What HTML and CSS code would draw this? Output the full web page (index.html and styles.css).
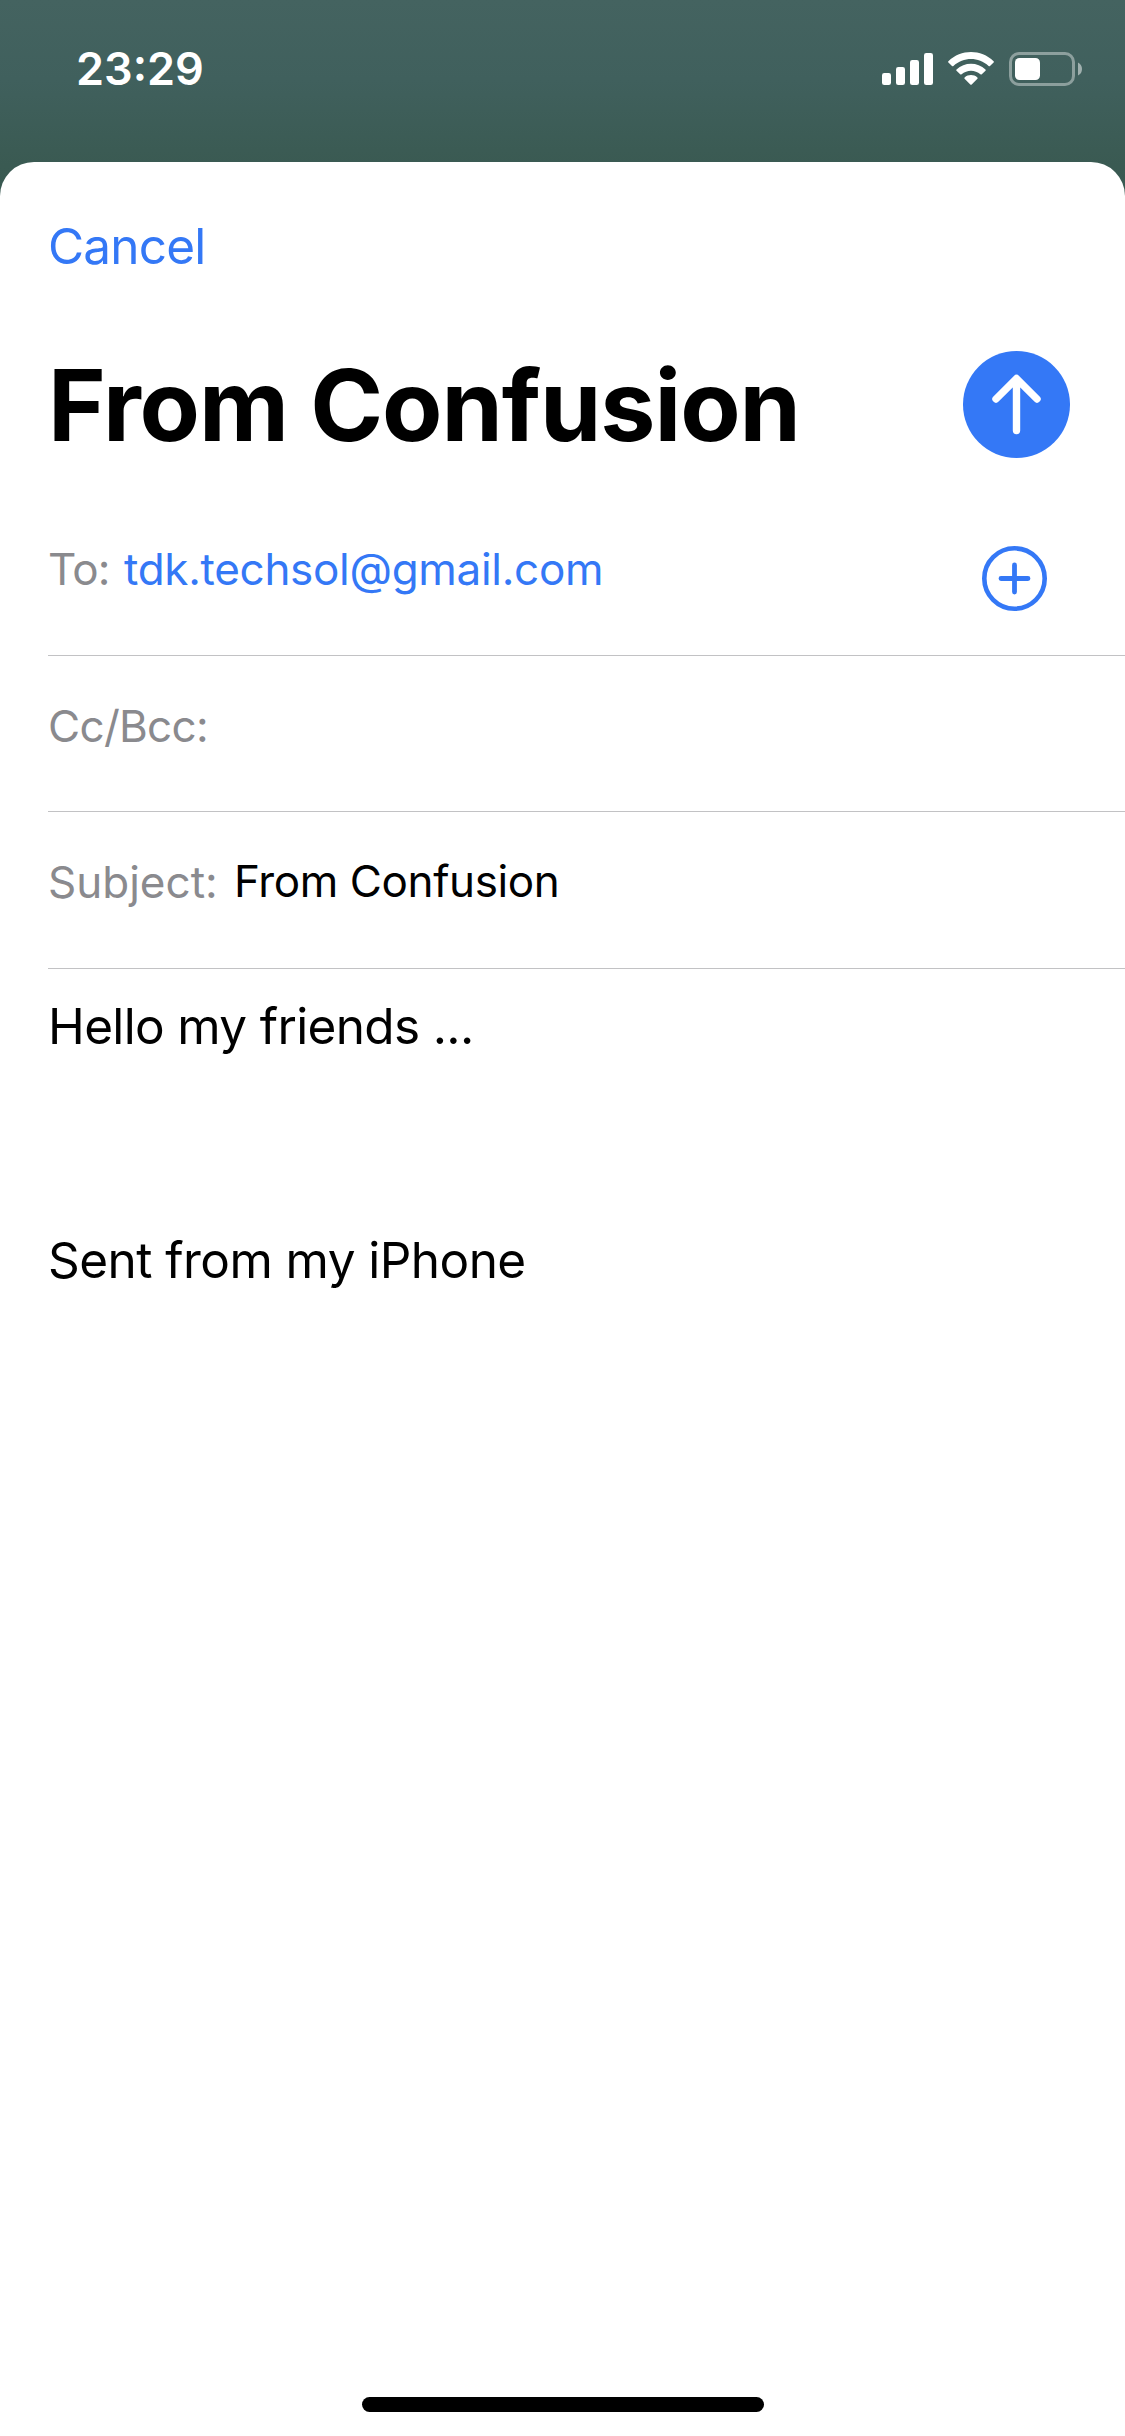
FILE: index.html
```html
<!DOCTYPE html>
<html lang="en">
<head>
<meta charset="utf-8">
<title>New Message</title>
<link rel="stylesheet" href="styles.css">
</head>
<body>
<header class="status-bar">
  <span class="time">23:29</span>
  <div class="indicators">
    <svg class="signal" width="51" height="32" viewBox="0 0 51 32" fill="#fff"><rect x="0" y="20" width="9" height="12" rx="2.3"/><rect x="14" y="14" width="9" height="18" rx="2.3"/><rect x="28" y="7" width="9" height="25" rx="2.3"/><rect x="42" y="0" width="9" height="32" rx="2.3"/></svg>
    <svg class="wifi" width="46" height="33" viewBox="0 0 46 33" fill="#fff"><path d="M.4 9.200C13-3 33-3 45.600 9.200Q46.200 9.900 45.600 10.500L42 14Q41.300 14.600 40.600 14C30.500 4.700 15.500 4.700 5.400 14Q4.700 14.600 4 14L.4 10.500Q-.2 9.900 .4 9.200Z"/><path d="M8.500 17.400C16.500 9.700 29.500 9.700 37.500 17.400Q38.100 18.100 37.500 18.700L33.800 22.300Q33.100 22.900 32.400 22.300C27 17.500 19 17.500 13.600 22.300Q12.900 22.900 12.200 22.300L8.500 18.700Q7.900 18.100 8.500 17.400Z"/><path d="M16.600 25.400C20.200 22.200 25.800 22.200 29.400 25.400Q30 26.100 29.400 26.700L23.700 32.400Q23 33 22.300 32.400L16.600 26.700Q16 26.100 16.600 25.400Z"/></svg>
    <svg class="battery" width="73" height="34" viewBox="0 0 73 34"><rect x="1.500" y="1.500" width="63" height="31" rx="8.500" fill="none" stroke="#fff" stroke-opacity=".4" stroke-width="3"/><rect x="6" y="6" width="25" height="22" rx="4.500" fill="#fff"/><path d="M69 10.500Q73 12.500 73 17T69 23.500Z" fill="#fff" fill-opacity=".5"/></svg>
  </div>
</header>
<main class="sheet">
  <nav class="nav"><a class="cancel">Cancel</a></nav>
  <div class="heading">
    <h1 class="title">From Confusion</h1>
    <svg class="send" width="107" height="107" viewBox="0 0 107 107"><circle cx="53.500" cy="53.500" r="53.500" fill="#3478f6"/><path d="M53.500 79.500V28M33 48L53.500 27.500 74 48" fill="none" stroke="#fff" stroke-width="7.400" stroke-linecap="round" stroke-linejoin="round"/></svg>
  </div>
  <div class="field field-to">
    <span class="label label-to">To:</span><span class="address">tdk.techsol@gmail.com</span>
    <svg class="add" width="65" height="65" viewBox="0 0 65 65" fill="none" stroke="#3478f6"><circle cx="32.500" cy="32.500" r="30.200" stroke-width="4.600"/><path d="M32.500 19V46M19 32.500H46" stroke-width="4.800" stroke-linecap="round"/></svg>
  </div>
  <div class="field field-cc"><span class="label label-cc">Cc/Bcc:</span></div>
  <div class="field field-subject"><span class="label label-subject">Subject:</span><span class="value">From Confusion</span></div>
  <div class="message">
    <p class="hello">Hello my friends ...</p>
    <p class="signature">Sent from my iPhone</p>
  </div>
  <div class="home-indicator"></div>
</main>
</body>
</html>
```
FILE: styles.css
```css
* { box-sizing: border-box; margin: 0; padding: 0; }

body {
  width: 1125px;
  height: 2436px;
  display: flex;
  flex-direction: column;
  background: linear-gradient(#446360 0, #40605d 80px, #3a5a52 165px, #375850 220px);
  font-family: Inter, "Liberation Sans", sans-serif;
  font-size: 49.5px;
  color: #000;
  overflow: hidden;
}

.status-bar {
  height: 162px;
  flex: none;
  display: flex;
  justify-content: space-between;
  padding: 52px 43px 0 76px;
  color: #fff;
}
.time { font-size: 45px; line-height: 34px; font-weight: 560; }
.indicators { display: flex; align-items: flex-start; }
.signal { margin: 1px 15px 0 0; }
.wifi { margin-right: 15px; }

.sheet {
  flex: 1;
  display: flex;
  flex-direction: column;
  background: #fff;
  border-radius: 34px 34px 0 0;
}
.nav { height: 162px; padding: 54px 48px 0; line-height: 60px; }
.cancel { color: #3478f6; letter-spacing: -0.8px; }

.heading {
  height: 186px;
  padding: 27px 55px 0 48px;
  display: flex;
  justify-content: space-between;
}
.title {
  font-size: 98.6px;
  font-weight: 700;
  line-height: 108px;
  letter-spacing: -1.05px;
}

.field {
  margin-left: 48px;
  padding-right: 78px;
  display: flex;
  align-items: flex-start;
  border-bottom: 1px solid #c2c2c4;
  font-size: 44px;
  line-height: 54px;
}
.field-to { height: 146px; padding-top: 32px; }
.field-cc { height: 156px; padding-top: 43px; }
.field-subject { height: 157px; padding-top: 42px; }
.label { color: #8a8a8e; }
.label-to { width: 76px; letter-spacing: -0.8px; }
.label-cc { letter-spacing: -0.7px; }
.label-subject { width: 186px; padding-top: 1px; }
.address { color: #3478f6; letter-spacing: -0.3px; }
.value { letter-spacing: -0.4px; }
.add { margin: 4px 0 0 auto; }

.message { flex: 1; padding: 27px 48px 0; line-height: 60px; }
.hello { letter-spacing: -0.65px; }
.signature { margin-top: 174px; letter-spacing: -0.55px; }

.home-indicator {
  width: 402px;
  height: 15px;
  margin: 0 auto 24px;
  border-radius: 8px;
  background: #000;
}
```
